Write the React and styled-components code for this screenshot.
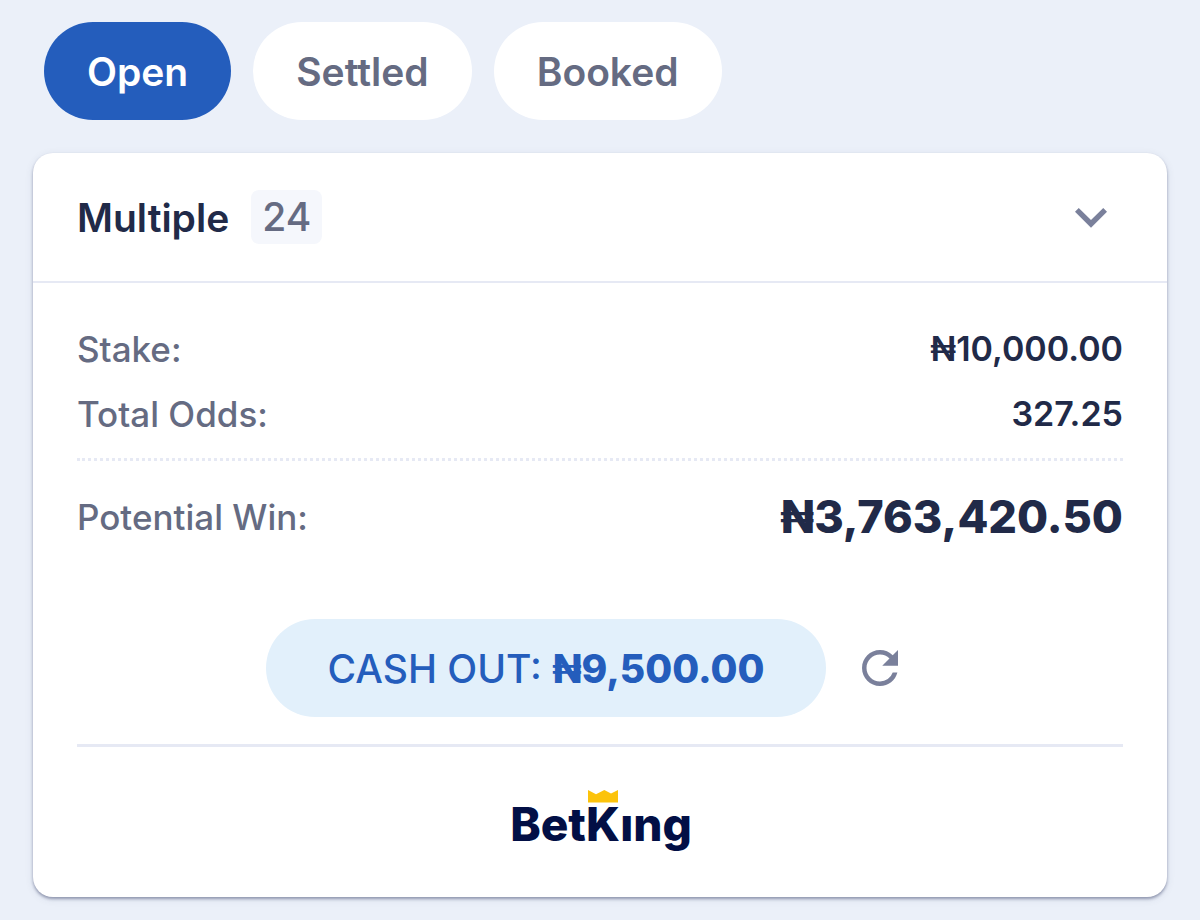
import React, { useState } from "react";
import styled, { createGlobalStyle, ThemeProvider } from "styled-components";
import { MdExpandMore, MdRefresh } from "react-icons/md";

const theme = {
  pageColor: "#ebf0f9",
  accentColor: "#245dbc",
  accentLight: "#e2f0fb",
  darkText: "#212a48",
  greyText: "#656b82",
  iconColor: "#7a809b",
  lineColor: "#e6e9f4",
};

const tabs = ["Open", "Settled", "Booked"];

const bet = {
  type: "Multiple",
  selections: 24,
  stake: "₦10,000.00",
  odds: "327.25",
  potentialWin: "₦3,763,420.50",
  cashOut: "₦9,500.00",
};

const App = () => {
  const [activeTab, setActiveTab] = useState("Open");

  return (
    <ThemeProvider theme={theme}>
      <GlobalStyle />
      <Wrapper>
        <Tabs>
          {tabs.map((tab) => (
            <Tab
              key={tab}
              type="button"
              aria-pressed={tab === activeTab}
              $active={tab === activeTab}
              onClick={() => setActiveTab(tab)}
            >
              {tab}
            </Tab>
          ))}
        </Tabs>
        <Card>
          <CardHeader>
            <Title>{bet.type}</Title>
            <Count>{bet.selections}</Count>
            <ToggleBtn type="button" aria-label="Show selections">
              <MdExpandMore />
            </ToggleBtn>
          </CardHeader>
          <CardBody>
            <Rows>
              <Row>
                <Label>Stake:</Label>
                <Value>{bet.stake}</Value>
              </Row>
              <Row>
                <Label>Total Odds:</Label>
                <Value>{bet.odds}</Value>
              </Row>
            </Rows>
            <WinRow>
              <Label>Potential Win:</Label>
              <WinValue>{bet.potentialWin}</WinValue>
            </WinRow>
            <Actions>
              <CashOutBtn type="button">
                CASH OUT: <Amount>{bet.cashOut}</Amount>
              </CashOutBtn>
              <RefreshBtn type="button" aria-label="Refresh cash out">
                <MdRefresh />
              </RefreshBtn>
            </Actions>
            <Footer>
              <Logo viewBox="0 0 200 72" role="img" aria-label="BetKing">
                <path
                  d="M88 2 L96 6.2 L104.3 2 L111 5.6 L118 2 V14.4 H88 Z"
                  fill="#fcc30b"
                />
                <LogoText x="101" y="53">
                  BetKıng
                </LogoText>
              </Logo>
            </Footer>
          </CardBody>
        </Card>
      </Wrapper>
    </ThemeProvider>
  );
};

const GlobalStyle = createGlobalStyle`
  * {
    box-sizing: border-box;
  }

  body {
    margin: 0;
    background-color: ${theme.pageColor};
    font-family: Inter, "Liberation Sans", sans-serif;
  }

  button {
    border: none;
    padding: 0;
    background: none;
    font-family: inherit;
    cursor: pointer;
  }
`;

const LogoText = styled.text`
  font-size: 46px;
  font-weight: 800;
  text-anchor: middle;
  fill: #020f45;
`;

const Logo = styled.svg`
  display: block;
  width: 200px;
  height: 72px;
`;

const Footer = styled.footer`
  display: flex;
  justify-content: center;
  margin-top: 27px;
  padding: 41px 0 37px;
  border-top: 3px solid ${(props) => props.theme.lineColor};
`;

const RefreshBtn = styled.button`
  display: flex;
  align-items: center;
  padding: 0 27px;
  font-size: 54px;
  color: ${(props) => props.theme.iconColor};
`;

const Amount = styled.span`
  font-weight: 800;
`;

const CashOutBtn = styled.button`
  height: 98px;
  padding: 0 61px;
  border-radius: 49px;
  background-color: ${(props) => props.theme.accentLight};
  color: ${(props) => props.theme.accentColor};
  font-size: 39px;
  font-weight: 500;
`;

const Actions = styled.div`
  display: flex;
  justify-content: center;
  margin-top: 78px;
`;

const Value = styled.span`
  color: ${(props) => props.theme.darkText};
  font-size: 34px;
  font-weight: 600;
`;

const WinValue = styled(Value)`
  font-size: 45px;
  font-weight: 800;
`;

const Label = styled.span`
  color: ${(props) => props.theme.greyText};
  font-size: 35px;
  font-weight: 500;
`;

const Row = styled.div`
  display: flex;
  align-items: center;
  justify-content: space-between;
  line-height: 40px;
`;

const WinRow = styled(Row)`
  padding-top: 32px;
  line-height: 48px;
`;

const Rows = styled.div`
  display: flex;
  flex-direction: column;
  gap: 25px;
  padding-bottom: 24px;
  border-bottom: 3px dotted ${(props) => props.theme.lineColor};
`;

const CardBody = styled.div`
  padding: 46px 44px 0;
`;

const ToggleBtn = styled.button`
  display: flex;
  margin-left: auto;
  font-size: 64px;
  color: ${(props) => props.theme.iconColor};
`;

const Count = styled.span`
  padding: 4px 11px;
  border-radius: 8px;
  background-color: #f5f7fc;
  color: ${(props) => props.theme.greyText};
  font-size: 39px;
  font-weight: 500;
  line-height: 46px;
`;

const Title = styled.h2`
  margin: 0;
  color: ${(props) => props.theme.darkText};
  font-size: 39px;
  font-weight: 600;
`;

const CardHeader = styled.header`
  display: flex;
  align-items: center;
  gap: 22px;
  padding: 32px 44px;
  border-bottom: 2px solid ${(props) => props.theme.lineColor};
`;

const Card = styled.section`
  border-radius: 20px;
  background-color: #fff;
  box-shadow: 0 2px 3px rgba(50, 60, 100, 0.45),
    0 2px 8px rgba(50, 60, 100, 0.1);
`;

const Tab = styled.button`
  height: 98px;
  padding: 0 43px;
  border-radius: 49px;
  background-color: ${(props) =>
    props.$active ? props.theme.accentColor : "#fff"};
  color: ${(props) => (props.$active ? "#fff" : props.theme.greyText)};
  font-size: 39px;
  font-weight: 600;
`;

const Tabs = styled.nav`
  display: flex;
  gap: 22px;
  padding: 0 11px;
`;

const Wrapper = styled.main`
  display: flex;
  flex-direction: column;
  gap: 33px;
  padding: 22px 33px;
`;

export default App;
